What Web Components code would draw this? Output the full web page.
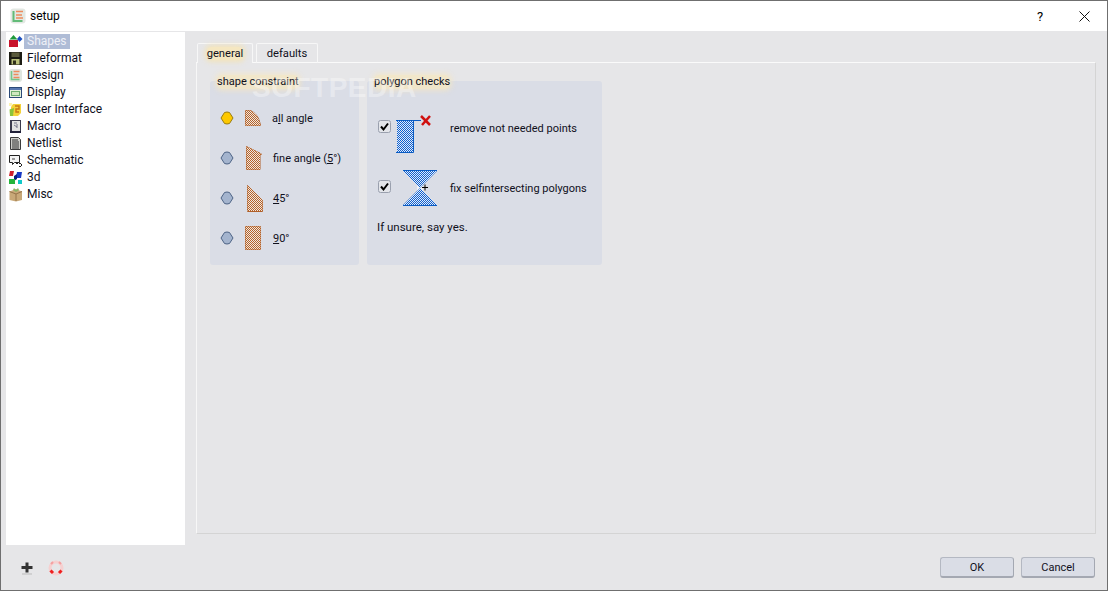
<!DOCTYPE html>
<html>
<head>
<meta charset="utf-8">
<title>setup</title>
<style>
html, body { margin: 0; padding: 0; }
body { font: 11px Roboto, sans-serif; color: #10101c; }
</style>
</head>
<body>
<setup-window>
  <title-bar slot="title">setup</title-bar>
  <nav-list slot="nav">
    <nav-item icon="shapes" selected>Shapes</nav-item>
    <nav-item icon="fileformat">Fileformat</nav-item>
    <nav-item icon="design">Design</nav-item>
    <nav-item icon="display">Display</nav-item>
    <nav-item icon="ui">User Interface</nav-item>
    <nav-item icon="macro">Macro</nav-item>
    <nav-item icon="netlist">Netlist</nav-item>
    <nav-item icon="schematic">Schematic</nav-item>
    <nav-item icon="3d">3d</nav-item>
    <nav-item icon="misc">Misc</nav-item>
  </nav-list>
  <tab-panel slot="main">
    <group-box label="shape constraint" style="width:149px">
      <radio-row shape="all" checked><span>a<u>l</u>l angle</span></radio-row>
      <radio-row shape="fine"><span>fine angle (<u>5</u>°)</span></radio-row>
      <radio-row shape="45"><span><u>4</u>5°</span></radio-row>
      <radio-row shape="90"><span><u>9</u>0°</span></radio-row>
    </group-box>
    <group-box label="polygon checks" style="width:235px">
      <check-row shape="points">remove not needed points</check-row>
      <check-row shape="cross">fix selfintersecting polygons</check-row>
      <p style="margin:13px 0 0 10px;line-height:16px;font-size:11.500px">If unsure, say yes.</p>
    </group-box>
  </tab-panel>
  <dialog-footer slot="footer"></dialog-footer>
</setup-window>

<script>
const APP_ICON = `<svg width="16" height="16" viewBox="0 0 16 16"><rect x="0.5" y="0.5" width="15" height="15" rx="3" fill="#e3e8e3"/><path d="M3.500 3v10h9" fill="none" stroke="#63bb78" stroke-width="2"/><path d="M6 3.500h7M6 7h6M6 10h7" stroke="#ee8a5c" stroke-width="1.600"/></svg>`;

const NAV_ICONS = {
  shapes: `<rect x="1" y="6" width="9" height="7" fill="#c8142c"/><path d="M5.500 1l4 4.500h-8z" fill="#1f9a3c"/><path d="M11.500 2l3 3-3 3-2.500-3z" fill="#1c50c0"/>`,
  fileformat: `<rect x="1" y="1" width="13" height="13" fill="#1c1c14"/><rect x="3.500" y="1.500" width="8" height="4.500" fill="#5a5a3c"/><rect x="3.500" y="8" width="8" height="5.500" fill="#b9c07a"/><rect x="5" y="9.500" width="3" height="4" fill="#30301c"/>`,
  design: `<rect x="1" y="1" width="13" height="13" rx="3" fill="#dfe5df"/><path d="M3.500 3v8.500h8" fill="none" stroke="#74c58a" stroke-width="1.600"/><path d="M5.500 3.500h6M5.500 6.500h5M5.500 9.500h6" stroke="#ee8a5c" stroke-width="1.300"/>`,
  display: `<rect x="1.500" y="2.500" width="12" height="10" fill="#e4f0dc" stroke="#2c4a78"/><rect x="2" y="3" width="11" height="2" fill="#5878b0"/><rect x="3.500" y="6.500" width="8" height="4" fill="#cfe8c0" stroke="#6cae70"/>`,
  ui: `<path d="M5 2h8v9l-3 3H3V5z" fill="#f4d23a"/><path d="M1.500 7.500L6 6l-1 8H2z" fill="#8cc43c"/><path d="M7 4h4v3H8v3h3" fill="none" stroke="#c87814" stroke-width="1.400"/><rect x="1" y="1" width="3" height="3" fill="#fbf2b0"/>`,
  macro: `<rect x="2" y="1" width="11" height="13" fill="#3a3a4c"/><rect x="4" y="2" width="8" height="10" fill="#e2e2e2"/><path d="M6 4h3M6 6l3 2M9 5v4" stroke="#77778a"/><rect x="2" y="12" width="11" height="2" fill="#22223a"/>`,
  netlist: `<path d="M2.500 1.500h8l2 2v10h-10z" fill="#cfcfca" stroke="#3c3c3c"/><path d="M4 4h6M4 6h7M4 8h7M4 10h7M4 12h7" stroke="#333" stroke-width="1"/>`,
  schematic: `<path d="M1.500 2.500h10v7h-5l-2 2v-2h-3z" fill="#f4f4f4" stroke="#222"/><path d="M8 10.500h5.500v3h-3" fill="none" stroke="#222" stroke-dasharray="2 1"/><rect x="4" y="5" width="3" height="2" fill="#999"/>`,
  '3d': `<path d="M2 1h4l-1 5H1z" fill="#d0202c"/><path d="M9 2h5l-1 6H8z" fill="#1838c4"/><path d="M6 6l3-2v5l-3 2z" fill="#0a2080"/><rect x="1" y="9" width="6" height="5" fill="#24b43c"/><rect x="10" y="10" width="4" height="4" fill="#10c8c8"/>`,
  misc: `<path d="M1.500 4.500L8 2l6 2.500V13l-6 1.500L1.500 13z" fill="#c8a878"/><path d="M1.500 4.500L8 7l6-2.500M8 7v7" fill="none" stroke="#96744a"/><path d="M6 1l2 2 2-2 1 2-3 2-3-2z" fill="#8cb468"/>`
};

const SHAPES = {
  all: { h: 16, d: 'M.5 .5H5C10 2 14 7 15.500 15.500H.5z' },
  fine: { h: 24, d: 'M1.500 .5L16.500 8 15 10V23.500H1.500z' },
  '45': { h: 29, d: 'M2.500 1.500L17.500 16.500V27.500H2.500z' },
  '90': { h: 24, d: 'M.5 .5H15.500V23.500H.5z' }
};

// checker fill clipped to the outline, the stroke svg sits in the same grid cell
const DITHER_CSS = `
.pic { display: grid; flex: none; }
.pic > * { grid-area: 1 / 1; display: block; }
.fill { background: repeating-conic-gradient(var(--ink) 0 25%, var(--paper) 0 50%) 0 0 / 2px 2px; }
`;

class SetupWindow extends HTMLElement {
  constructor() {
    super();
    this.attachShadow({ mode: 'open' }).innerHTML = `
<style>
:host {
  display: flex; flex-direction: column; box-sizing: border-box; position: relative;
  width: 1108px; height: 591px; overflow: hidden;
  background: #e6e6e8;
  border: 1px solid #6f6f6f;
}
.body { flex: 1; display: flex; min-height: 0; padding: 1px 11px 0 5px; gap: 11px; }
.main { flex: 1; min-width: 0; padding-top: 11px; padding-bottom: 11px; display: flex; }
.mark {
  position: absolute; left: 251px; top: 71px;
  font: bold 28px "Liberation Sans", sans-serif; letter-spacing: .5px;
  color: rgba(255,255,255,.36); pointer-events: none; white-space: nowrap;
}
</style>
<slot name="title"></slot>
<div class="body">
  <slot name="nav"></slot>
  <div class="main"><slot name="main"></slot></div>
</div>
<slot name="footer"></slot>
<div class="mark">SOFTPEDIA</div>`;
  }
}

class TitleBar extends HTMLElement {
  constructor() {
    super();
    this.attachShadow({ mode: 'open' }).innerHTML = `
<style>
:host {
  display: flex; align-items: center; height: 30px; background: #fff;
  padding: 0 17px 0 9px; gap: 4px; font-size: 12px; color: #000; flex: none;
}
.t { flex: 1; }
.q { width: 16px; text-align: center; margin-right: 27px; font-size: 13px; }
svg { display: block; }
</style>
${APP_ICON}
<span class="t"><slot></slot></span>
<span class="q">?</span>
<svg width="11" height="11" viewBox="0 0 11 11"><path d="M.5.5l10 10M10.500.5l-10 10" stroke="#111" fill="none"/></svg>`;
  }
}

class NavList extends HTMLElement {
  constructor() {
    super();
    this.attachShadow({ mode: 'open' }).innerHTML = `
<style>
:host {
  display: flex; flex-direction: column; flex: none; box-sizing: border-box;
  width: 179px; height: 513px; background: #fff; padding: 1px 0 0 2px; font-size: 12px;
}
</style>
<slot></slot>`;
  }
}

class NavItem extends HTMLElement {
  constructor() {
    super();
    this.attachShadow({ mode: 'open' }).innerHTML = `
<style>
:host { display: flex; align-items: center; height: 17px; }
svg { flex: none; display: block; }
.l { margin-left: 1px; padding: 0 3px; height: 15px; line-height: 15px; white-space: nowrap; }
:host([selected]) .l { background: #afbcd6; color: #eef0f6; }
</style>
<svg width="15" height="15" viewBox="0 0 15 15">${NAV_ICONS[this.getAttribute('icon')]}</svg>
<span class="l"><slot></slot></span>`;
  }
}

class TabPanel extends HTMLElement {
  constructor() {
    super();
    this.attachShadow({ mode: 'open' }).innerHTML = `
<style>
:host { display: flex; flex-direction: column; flex: 1; min-width: 0; }
.tabs { display: flex; height: 19px; gap: 3px; padding-left: 1px; flex: none; }
.tab {
  box-sizing: border-box; height: 20px; border: 1px solid #f7f7f7; border-bottom: 0;
  border-radius: 2px 2px 0 0; line-height: 19px; text-align: center; position: relative; z-index: 1;
  font-size: 11.200px;
}
.on { width: 56px; background: #e6e6e8; }
.on span { background: rgba(247,230,186,.85); box-shadow: 0 0 5px 2px rgba(247,226,170,.7); border-radius: 4px; }
.off { width: 62px; }
.page {
  flex: 1; box-sizing: border-box; border: 1px solid #d4d4d4; border-top-color: #fafafa; border-left-color: #f7f7f7;
  padding: 18px 8px 0 13px; display: flex; align-items: flex-start; gap: 8px;
}
</style>
<div class="tabs">
  <div class="tab on"><span>general</span></div>
  <div class="tab off">defaults</div>
</div>
<div class="page"><slot></slot></div>`;
  }
}

class GroupBox extends HTMLElement {
  constructor() {
    super();
    this.attachShadow({ mode: 'open' }).innerHTML = `
<style>
:host {
  display: block; box-sizing: border-box; height: 184px; background: #dadde6;
  border-radius: 3px; position: relative; padding-top: 17px;
}
.cap {
  position: absolute; left: 7px; top: -6px; line-height: 14px; white-space: nowrap;
  background: rgba(246,231,192,.75); box-shadow: 0 0 5px 2px rgba(246,231,192,.65); border-radius: 5px;
}
</style>
<span class="cap">${this.getAttribute('label')}</span>
<slot></slot>`;
  }
}

class RadioRow extends HTMLElement {
  constructor() {
    super();
    const key = this.getAttribute('shape');
    const s = SHAPES[key];
    const on = this.hasAttribute('checked');
    this.attachShadow({ mode: 'open' }).innerHTML = `
<style>
${DITHER_CSS}
:host { display: flex; align-items: center; height: 40px; padding-left: 10px; --ink: #b5622a; --paper: #f0e8e0; }
.r { flex: none; display: block; }
.pic { margin-left: 11px; width: 18px; height: ${s.h}px; }
.fill { clip-path: path('${s.d}'); }
.t { margin-left: ${key === 'all' ? 9 : 10}px; white-space: nowrap; }
</style>
<svg class="r" width="14" height="14" viewBox="0 0 14 14"><path d="M4.500 1.500Q7 .5 9.500 1.500L13 7 9.500 12.500Q7 13.500 4.500 12.500L1 7z" fill="${on ? '#fdc800' : '#a4b4ce'}" stroke="${on ? '#9a7c10' : '#4e6486'}"/></svg>
<span class="pic"><span class="fill"></span><svg width="18" height="${s.h}" viewBox="0 0 18 ${s.h}"><path d="${s.d}" fill="none" stroke="#b0602a"/></svg></span>
<span class="t"><slot></slot></span>`;
  }
}

class CheckRow extends HTMLElement {
  constructor() {
    super();
    const pts = this.getAttribute('shape') === 'points';
    const clip = pts ? 'M1 6H17V37H1z' : 'M1 1H35L18 18 35 35H1L18 18z';
    const lines = pts
      ? `<path d="M0 5.500H25M17.500 5V37.500H0" fill="none" stroke="#0a5cc4"/><path d="M25 1L34 10M34 1L26 10" stroke="#d01010" stroke-width="2.500" fill="none"/>`
      : `<path d="M1 .5H35M1 35.500H35" stroke="#0a5cc4" fill="none"/><rect x="15" y="15" width="6" height="6" fill="#eef2fa"/><path d="M20 17.500h6M23 14.500v6" stroke="#000"/>`;
    const h = pts ? 38 : 36;
    this.attachShadow({ mode: 'open' }).innerHTML = `
<style>
${DITHER_CSS}
:host { display: flex; align-items: center; height: 36px; padding-left: 11px; margin-top: ${pts ? 12 : 24}px; --ink: #0f60d0; --paper: #e4ecf8; }
.c { flex: none; display: block; margin-top: -4px; }
.pic { width: 36px; height: ${h}px; margin-left: ${pts ? 5 : 11}px; margin-top: ${pts ? 12 : 0}px; }
.fill { clip-path: path('${clip}'); }
.t { margin-left: ${pts ? 18 : 12}px; white-space: nowrap; }
</style>
<svg class="c" width="13" height="13" viewBox="0 0 13 13"><rect x=".5" y=".5" width="12" height="12" rx="2" fill="#e3e5ea" stroke="#9aa0ae"/><path d="M3 6.500l2.500 3L10 3.500" fill="none" stroke="#000" stroke-width="2"/></svg>
<span class="pic"><span class="fill"></span><svg width="36" height="${h}" viewBox="0 0 36 ${h}">${lines}</svg></span>
<span class="t"><slot></slot></span>`;
  }
}

class DialogButton extends HTMLElement {
  constructor() {
    super();
    this.attachShadow({ mode: 'open' }).innerHTML = `
<style>
:host {
  display: block; box-sizing: border-box; width: 74px; height: 21px; line-height: 20px; text-align: center;
  background: #dadde6; border: 1px solid #b4b8c2; border-right-color: #a4a8b2; border-bottom: 2px solid #a4a8b2; border-radius: 3px;
}
</style>
<slot></slot>`;
  }
}

class DialogFooter extends HTMLElement {
  constructor() {
    super();
    this.attachShadow({ mode: 'open' }).innerHTML = `
<style>
:host {
  display: flex; align-items: center; box-sizing: border-box; height: 45px; flex: none;
  padding: 0 12px 0 19px; gap: 7px;
}
svg { display: block; }
.sp { flex: 1; }
</style>
<svg width="14" height="14" viewBox="0 0 14 14"><path d="M7 1.500v10M1.500 6.500h11" stroke="#333" stroke-width="3"/><path d="M2 13h10" stroke="#bbb"/></svg>
<svg width="18" height="18" viewBox="0 0 18 18" style="margin-left:6px"><circle cx="9" cy="9" r="6" fill="none" stroke="#f6d0d0" stroke-width="3"/><path d="M3.500 11.500l2.500 2.500M14.500 11.500l-2.500 2.500" stroke="#ee2020" stroke-width="3"/><path d="M4 5l2-2M12 3l2 2" stroke="#f4a0a0" stroke-width="2"/></svg>
<span class="sp"></span>
<dialog-button>OK</dialog-button>
<dialog-button>Cancel</dialog-button>`;
  }
}

customElements.define('setup-window', SetupWindow);
customElements.define('title-bar', TitleBar);
customElements.define('nav-list', NavList);
customElements.define('nav-item', NavItem);
customElements.define('tab-panel', TabPanel);
customElements.define('group-box', GroupBox);
customElements.define('radio-row', RadioRow);
customElements.define('check-row', CheckRow);
customElements.define('dialog-button', DialogButton);
customElements.define('dialog-footer', DialogFooter);
</script>
</body>
</html>
